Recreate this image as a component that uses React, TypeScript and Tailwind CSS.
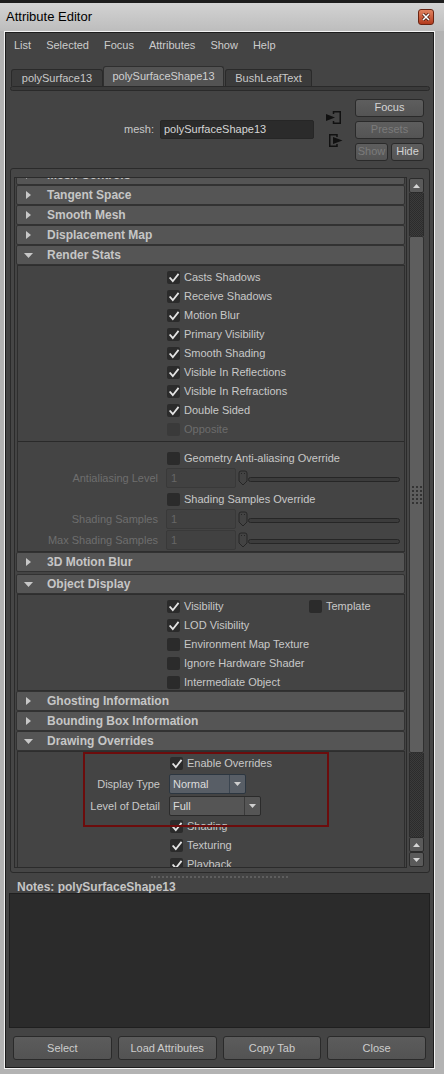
import React from 'react'

// small Maya-style widgets

function Check({ checked = false, disabled = false }: { checked?: boolean; disabled?: boolean }) {
  return (
    <span
      className={`w-[13px] h-[13px] rounded-[2px] flex items-center justify-center shrink-0 ${
        disabled ? 'bg-[#3a3a3a]' : 'bg-[#2b2b2b]'
      }`}
    >
      {checked && (
        <svg width="12" height="12" viewBox="0 0 12 12">
          <path d="M2.2 6.2 L4.8 9.2 L10 2.6" fill="none" stroke="#e4e4e4" strokeWidth="1.8" strokeLinecap="square" />
        </svg>
      )}
    </span>
  )
}

function CheckRow({
  label,
  checked = false,
  disabled = false,
  pl = 'pl-[149px]',
  h = 'h-[19px]',
}: {
  label: string
  checked?: boolean
  disabled?: boolean
  pl?: string
  h?: string
}) {
  return (
    <div className={`${h} ${pl} flex items-center gap-[4px]`}>
      <Check checked={checked} disabled={disabled} />
      <span className={`text-[11px] whitespace-nowrap ${disabled ? 'text-[#6c6c6c]' : 'text-[#c8c8c8]'}`}>{label}</span>
    </div>
  )
}

function SliderRow({ label }: { label: string }) {
  return (
    <div className="h-[21px] flex items-start">
      <div className="w-[140px] text-right text-[11px] leading-[20px] text-[#6e6e6e] whitespace-nowrap">{label}</div>
      <div className="ml-[8px] w-[70px] h-[20px] border border-[#393939] bg-[#414141] rounded-[2px] text-[11px] leading-[18px] text-[#666] pl-[4px]">
        1
      </div>
      <svg className="ml-[2px] mt-[2px] shrink-0" width="10" height="16" viewBox="0 0 10 16">
        <path d="M1 3 Q1 1 3 1 L7 1 Q9 1 9 3 L9 11 L5 15 L1 11 Z" fill="#434343" stroke="#262626" strokeWidth="1" />
        <rect x="3" y="3" width="1" height="1" fill="#262626" />
        <rect x="6" y="3" width="1" height="1" fill="#262626" />
      </svg>
      <div className="flex-1 h-[5px] mt-[9px] mr-[4px] rounded-full border border-[#262626] bg-[#3c3c3c]" />
    </div>
  )
}

function Header({ title, open = false }: { title: string; open?: boolean }) {
  return (
    <div className="h-[20px] mx-[1px] flex items-center bg-[#555555] border border-[#323232] rounded-[2px]">
      <span className={`w-[30px] shrink-0 flex items-center ${open ? 'pl-[7px]' : 'pl-[9px]'}`}>
        {open ? (
          <svg width="9" height="5" viewBox="0 0 9 5">
            <polygon points="0,0 9,0 4.5,5" fill="#c8c8c8" />
          </svg>
        ) : (
          <svg width="5" height="8" viewBox="0 0 5 8">
            <polygon points="0,0 5,4 0,8" fill="#c8c8c8" />
          </svg>
        )}
      </span>
      <span className="text-[12px] font-bold text-[#c6c6c6] whitespace-nowrap">{title}</span>
    </div>
  )
}

function Dropdown({ value, w, hl = false }: { value: string; w: string; hl?: boolean }) {
  return (
    <div
      className={`${w} ml-[9px] h-[20px] flex rounded-[2px] border ${
        hl ? 'bg-[#585e66] border-[#2c3640]' : 'bg-[#555555] border-[#2b2b2b]'
      }`}
    >
      <span className="flex-1 text-[11px] leading-[18px] text-[#dcdcdc] pl-[3px]">{value}</span>
      <span className={`w-[16px] flex items-center justify-center border-l ${hl ? 'border-[#3b4550]' : 'border-[#3a3a3a]'}`}>
        <svg width="7" height="4" viewBox="0 0 7 4">
          <polygon points="0,0 7,0 3.5,4" fill="#cfcfcf" />
        </svg>
      </span>
    </div>
  )
}

function Btn({ children, w = '', disabled = false }: { children: React.ReactNode; w?: string; disabled?: boolean }) {
  return (
    <div
      className={`${w} h-[18px] flex items-center justify-center rounded-[3px] border border-[#2a2a2a] bg-linear-to-b from-[#5e5e5e] to-[#545454] text-[11px] ${
        disabled ? 'text-[#7b7b7b]' : 'text-[#d4d4d4]'
      }`}
    >
      {children}
    </div>
  )
}

function ScrollBtn({ down = false }: { down?: boolean }) {
  return (
    <div className="h-[15px] flex items-center justify-center rounded-[2px] border border-[#2b2b2b] bg-[#5a5a5a]">
      <svg width="7" height="4" viewBox="0 0 7 4">
        <polygon points={down ? '0,0 7,0 3.5,4' : '0,4 7,4 3.5,0'} fill="#d6d6d6" />
      </svg>
    </div>
  )
}

const checker =
  'bg-[repeating-conic-gradient(#2c2c2c_0%_25%,#3b3b3b_0%_50%)] bg-[length:2px_2px] border-x border-[#2b2b2b]'

export default function App() {
  return (
    <div className="w-[444px] h-[1074px] overflow-hidden flex flex-col bg-[#b3b3b3] font-['Liberation_Sans','Arial',sans-serif]">
      {/* top edge */}
      <div className="h-[3px] bg-[#1d1d1d]" />

      {/* title bar */}
      <div className="h-[28px] flex items-center justify-between pl-[6px] pr-[10px] bg-linear-to-b from-[#d3d3d3] to-[#bdbdbd]">
        <span className="text-[13px] text-black">Attribute Editor</span>
        <div className="w-[16px] h-[16px] rounded-[3px] border border-[#6a2412] bg-linear-to-b from-[#e08360] to-[#b33a1c] flex items-center justify-center">
          <svg width="8" height="8" viewBox="0 0 8 8">
            <path d="M1 1 L7 7 M7 1 L1 7" stroke="#3a1208" strokeWidth="3" />
            <path d="M1 1 L7 7 M7 1 L1 7" stroke="#ffffff" strokeWidth="1.6" />
          </svg>
        </div>
      </div>

      {/* window body */}
      <div className="ml-[4px] mr-[9px] mb-[5px] border border-[#f2f2f2]">
        <div className="border border-[#1c1c1c] bg-[#444444] flex flex-col">
          {/* menu */}
          <div className="h-[24px] flex items-center pl-[8px] gap-[15px] text-[11px] text-[#cccccc]">
            <span>List</span>
            <span>Selected</span>
            <span>Focus</span>
            <span>Attributes</span>
            <span>Show</span>
            <span>Help</span>
          </div>

          {/* tabs */}
          <div className="mt-[9px] h-[20px] flex items-end pl-[5px] text-[11px] whitespace-nowrap">
            <div className="w-[92px] h-[17px] flex items-center justify-center rounded-t-[3px] border border-b-0 border-[#2a2a2a] bg-[#3b3b3b] text-[#c8c8c8]">
              polySurface13
            </div>
            <div className="w-[121px] h-[20px] flex items-center justify-center rounded-t-[3px] border border-b-0 border-[#2f2f2f] bg-[#535353] text-[#d0d0d0]">
              polySurfaceShape13
            </div>
            <div className="ml-[1px] w-[87px] h-[17px] flex items-center justify-center rounded-t-[3px] border border-b-0 border-[#2a2a2a] bg-[#3b3b3b] text-[#c8c8c8]">
              BushLeafText
            </div>
          </div>
          <div className="ml-[4px] mr-[3px] h-[5px] rounded-full border border-[#2a2a2a] bg-[#3a3a3a]" />

          {/* mesh row */}
          <div className="h-[77px] flex items-center pl-[118px]">
            <span className="w-[30px] text-right text-[11px] text-[#c8c8c8]">mesh:</span>
            <div className="ml-[6px] w-[154px] h-[19px] rounded-[2px] border border-[#262626] bg-[#2b2b2b] text-[11px] leading-[17px] text-[#d6d6d6] pl-[3px]">
              polySurfaceShape13
            </div>
            <svg className="ml-[12px] shrink-0" width="17" height="37" viewBox="0 0 17 37">
              <path d="M7.5 3 V0.75 H14.25 V12.25 H7.5 V10" fill="none" stroke="#111" strokeWidth="1.5" />
              <polygon points="0,3 9,6.5 0,10" fill="#111" />
              <path d="M11 26 V23.75 H3.75 V35.25 H11 V33" fill="none" stroke="#111" strokeWidth="1.5" />
              <polygon points="7,26 16.5,29.5 7,33" fill="#111" />
            </svg>
            <div className="ml-[12px] w-[69px] flex flex-col gap-[4px]">
              <Btn>Focus</Btn>
              <Btn disabled>Presets</Btn>
              <div className="flex gap-[3px]">
                <Btn w="w-[33px]" disabled>
                  Show
                </Btn>
                <Btn w="w-[33px]">Hide</Btn>
              </div>
            </div>
          </div>

          {/* attribute scroll panel */}
          <div className="ml-[4px] mr-[3px] h-[705px] rounded-[3px] border border-[#2a2a2a] bg-[#464646] flex pl-[3px] pr-[5px] pt-[8px] pb-[4px]">
            <div className="flex-1 border border-[#2b2b2b] bg-[#444444] overflow-hidden">
              <div className="-mt-[13px]">
                <Header title="Mesh Controls" />
                <Header title="Tangent Space" />
                <Header title="Smooth Mesh" />
                <Header title="Displacement Map" />
                <Header title="Render Stats" open />

                <div className="ml-[2px] mr-[1px] border border-[#2e2e2e] pt-[2px]">
                  <CheckRow label="Casts Shadows" checked />
                  <CheckRow label="Receive Shadows" checked />
                  <CheckRow label="Motion Blur" checked />
                  <CheckRow label="Primary Visibility" checked />
                  <CheckRow label="Smooth Shading" checked />
                  <CheckRow label="Visible In Reflections" checked />
                  <CheckRow label="Visible In Refractions" checked />
                  <CheckRow label="Double Sided" checked />
                  <CheckRow label="Opposite" disabled />
                  <div className="mt-[2px] h-[1px] bg-[#2a2a2a] mb-[7px]" />
                  <CheckRow label="Geometry Anti-aliasing Override" />
                  <SliderRow label="Antialiasing Level" />
                  <CheckRow label="Shading Samples Override" h="h-[20px]" />
                  <SliderRow label="Shading Samples" />
                  <SliderRow label="Max Shading Samples" />
                </div>

                <Header title="3D Motion Blur" />
                <div className="h-[2px]" />
                <Header title="Object Display" open />
                <div className="ml-[2px] mr-[1px] h-[97px] border border-[#2e2e2e] pt-[2px]">
                  <div className="h-[19px] pl-[149px] flex items-center">
                    <div className="w-[142px] flex items-center gap-[4px]">
                      <Check checked />
                      <span className="text-[11px] text-[#c8c8c8]">Visibility</span>
                    </div>
                    <Check />
                    <span className="ml-[4px] text-[11px] text-[#c8c8c8]">Template</span>
                  </div>
                  <CheckRow label="LOD Visibility" checked />
                  <CheckRow label="Environment Map Texture" />
                  <CheckRow label="Ignore Hardware Shader" />
                  <CheckRow label="Intermediate Object" />
                </div>

                <Header title="Ghosting Information" />
                <Header title="Bounding Box Information" />
                <Header title="Drawing Overrides" open />
                <div className="relative ml-[2px] mr-[1px] border border-[#2e2e2e] pt-[2px] h-[140px]">
                  <CheckRow label="Enable Overrides" checked pl="pl-[152px]" />
                  <div className="h-[22px] flex items-center">
                    <span className="w-[142px] text-right text-[11px] text-[#c8c8c8]">Display Type</span>
                    <Dropdown value="Normal" w="w-[77px]" hl />
                  </div>
                  <div className="h-[22px] flex items-center">
                    <span className="w-[142px] text-right text-[11px] text-[#c8c8c8]">Level of Detail</span>
                    <Dropdown value="Full" w="w-[92px]" />
                  </div>
                  <CheckRow label="Shading" checked pl="pl-[152px]" />
                  <CheckRow label="Texturing" checked pl="pl-[152px]" />
                  <CheckRow label="Playback" checked pl="pl-[152px]" />
                  {/* annotation box */}
                  <div className="absolute top-[0px] left-[65px] w-[246px] h-[75px] border-2 border-[#6c0c0c]" />
                </div>
              </div>
            </div>

            {/* scrollbar */}
            <div className="ml-[2px] w-[15px] flex flex-col mt-[1px] mb-[1px]">
              <ScrollBtn />
              <div className={`h-[43px] ${checker}`} />
              <div className="h-[517px] rounded-[2px] border border-[#303030] bg-[#5e5e5e] flex items-center justify-center">
                <svg width="10" height="18" viewBox="0 0 10 18">
                  {[0, 1, 2].map((c) =>
                    [0, 1, 2, 3, 4].map((r) => (
                      <rect key={`${c}-${r}`} x={c * 4} y={r * 4} width="2" height="2" fill="#333" />
                    ))
                  )}
                </svg>
              </div>
              <div className={`flex-1 ${checker}`} />
              <ScrollBtn />
              <ScrollBtn down />
            </div>
          </div>

          {/* drag handle */}
          <div className="h-[7px] flex items-center justify-center">
            <div className="w-[137px] border-t-2 border-dotted border-[#5e5e5e]" />
          </div>

          {/* notes */}
          <div className="h-[13px] flex items-center pl-[11px] text-[12px] font-bold text-[#c6c6c6]">
            Notes: polySurfaceShape13
          </div>
          <div className="ml-[3px] mr-[3px] h-[135px] border border-[#1f1f1f] bg-[#2b2b2b]" />

          {/* bottom buttons */}
          <div className="mt-[8px] mb-[7px] px-[7px] grid grid-cols-4 gap-[6px]">
            {['Select', 'Load Attributes', 'Copy Tab', 'Close'].map((b) => (
              <div
                key={b}
                className="h-[24px] flex items-center justify-center rounded-[3px] border border-[#2a2a2a] bg-linear-to-b from-[#5c5c5c] to-[#535353] text-[11px] text-[#cdcdcd]"
              >
                {b}
              </div>
            ))}
          </div>
        </div>
      </div>
    </div>
  )
}
